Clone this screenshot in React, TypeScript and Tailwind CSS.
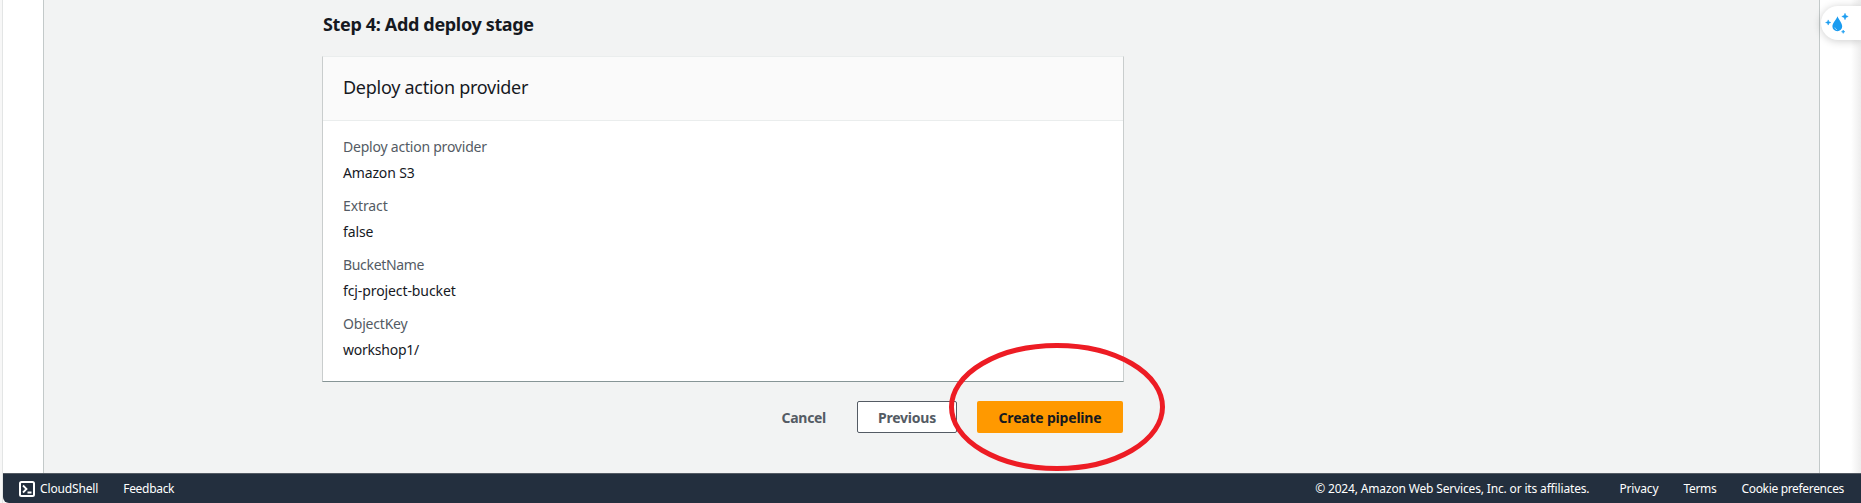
const details = [
  { label: "Deploy action provider", value: "Amazon S3", labelClass: "tracking-[-0.22px]", valueClass: "tracking-[-0.15px]" },
  { label: "Extract", value: "false", labelClass: "tracking-[-0.1px]", valueClass: "tracking-[-0.1px]" },
  { label: "BucketName", value: "fcj-project-bucket", labelClass: "tracking-[-0.32px]", valueClass: "tracking-[-0.1px]" },
  { label: "ObjectKey", value: "workshop1/", labelClass: "tracking-[-0.2px]", valueClass: "tracking-[-0.23px]" },
];

function CloudShellIcon() {
  return (
    <svg className="mt-px" width="16" height="16" viewBox="0 0 16 16" fill="none" stroke="#fff" strokeWidth="2">
      <rect x="1" y="1" width="14" height="14" rx="1.5" />
      <path d="M4 4.500 7.500 8 4 11.500M8.500 11.500H12.500" strokeWidth="1.8" />
    </svg>
  );
}

function DropIcon() {
  return (
    <svg className="mt-[2px]" width="26" height="24" viewBox="0 0 26 24" fill="#1b9cf0">
      <path d="M12.500 4.200C14 8.200 17.200 11 17.200 14.300a4.900 4.900 0 0 1-9.800 0C7.400 11 11 8.200 12.500 4.200Z" />
      <path d="M9.800 15.500a3 3 0 0 0 2.300 2.300" fill="none" stroke="#8fd0fb" strokeWidth="1" />
      <path d="M20 1.300l.9 2.300 2.300.9-2.300.9L20 7.700l-.9-2.300-2.300-.9 2.300-.9ZM3.200 7.900l.7 1.900 1.900.7-1.900.7-.7 1.900-.7-1.900-1.900-.7 1.900-.7ZM18.200 18l.5 1.200 1.200.5-1.200.5-.5 1.200-.5-1.200-1.200-.5 1.200-.5Z" stroke="#1b9cf0" strokeWidth=".5" />
    </svg>
  );
}

export default function App() {
  return (
    <div className="relative flex h-[503px] w-full flex-col overflow-hidden bg-white pl-[3px] font-['Noto_Sans','Open_Sans',sans-serif] text-[#16191f]">
      <div className="absolute inset-y-0 left-0 w-[3px] border-r border-[#e3e5e5] bg-[#f7f7f7]" />
      <div className="flex h-[473px]">
        <div className="w-10 shrink-0 bg-white" />
        <main className="w-[1777px] shrink-0 border-x border-[#c3c9c9] bg-[#f2f3f3] pl-[278px]">
          <h2 className="mt-[11px] h-[45px] pl-px text-[18px] leading-[26px] font-bold tracking-[-0.34px]">Step 4: Add deploy stage</h2>
          <section className="h-[326px] w-[802px] border border-t-[#eaeded] border-r-[#c9cdcd] border-b-[#879596] border-l-[#c9cdcd] bg-white">
            <header className="h-[64px] border-b border-[#eaeded] bg-[#fafafa] px-5 pt-[18px]">
              <h3 className="text-[18px] leading-[24px] tracking-[-0.27px]">Deploy action provider</h3>
            </header>
            <dl className="px-5 pt-[15px] text-[14px] leading-[22px]">
              {details.map((d) => (
                <div key={d.label} className="h-[59px]">
                  <dt className={"h-[26px] text-[#545b64] " + d.labelClass}>{d.label}</dt>
                  <dd className={d.valueClass}>{d.value}</dd>
                </div>
              ))}
            </dl>
          </section>
          <div className="mt-[19px] flex h-8 w-[801px] items-center justify-end text-[14px] font-bold text-[#545b64]">
            <button className="mr-[31px] tracking-[-0.3px]">Cancel</button>
            <button className="mr-5 h-8 w-[100px] rounded-[2px] border border-[#545b64] bg-white tracking-[-0.2px]">Previous</button>
            <button className="h-8 w-[146px] rounded-[2px] bg-[#ff9900] tracking-[-0.2px] text-[#16191f]">Create pipeline</button>
          </div>
        </main>
        <div className="flex grow justify-end bg-white">
          <div className="w-[10px] bg-linear-to-r from-white to-[#ededed]" />
        </div>
      </div>
      <div className="flex grow bg-[#f7f7f7]">
        <footer className="flex h-[30px] grow items-center rounded-bl-[6px] border-t border-[#545b64] bg-[#232f3e] pl-4 pr-[17px] text-[12px] text-white">
          <CloudShellIcon />
          <span className="ml-[5px] tracking-[-0.15px]">CloudShell</span>
          <span className="ml-[25px] tracking-[-0.3px]">Feedback</span>
          <span className="ml-auto tracking-[-0.16px]">© 2024, Amazon Web Services, Inc. or its affiliates.</span>
          <span className="ml-[30px] tracking-[-0.15px]">Privacy</span>
          <span className="ml-[25px] tracking-[-0.28px]">Terms</span>
          <span className="ml-[25px] tracking-[-0.33px]">Cookie preferences</span>
        </footer>
      </div>
      <div className="absolute top-[6px] right-0 flex h-[34px] w-10 items-center rounded-l-full bg-white pl-1 shadow-[0_1px_8px_rgba(0,0,0,0.2)]">
        <DropIcon />
      </div>
      <svg className="absolute top-[343px] left-[949px]" width="217" height="129" viewBox="0 0 217 129" fill="none">
        <ellipse cx="108" cy="64" rx="105.5" ry="61.5" stroke="#ed1c24" strokeWidth="5" />
      </svg>
    </div>
  );
}
